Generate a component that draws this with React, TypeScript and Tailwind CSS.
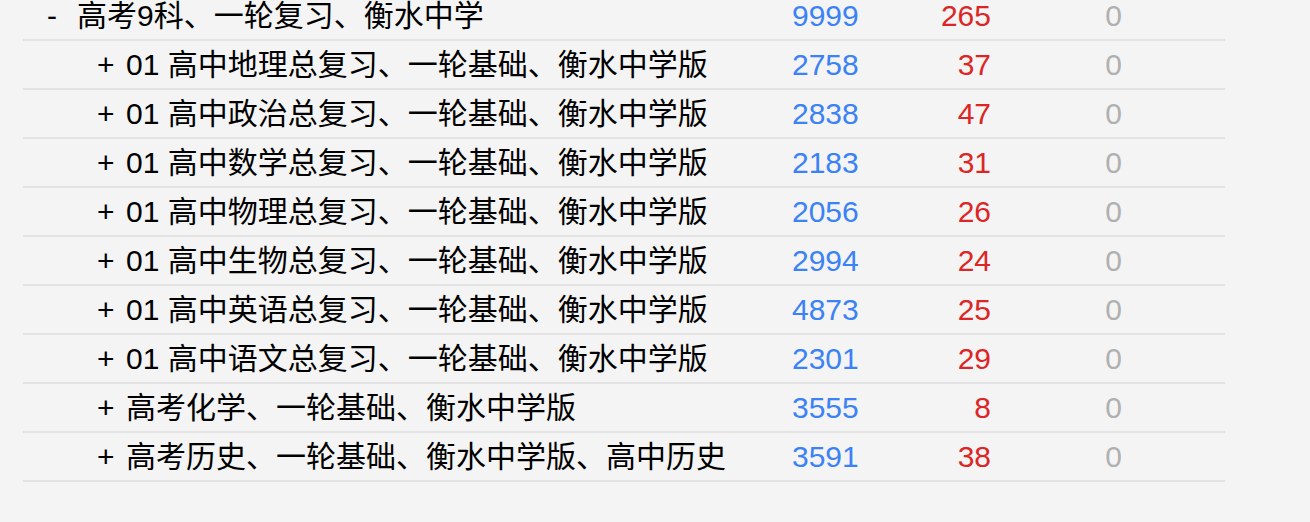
const rows = [
  { level: 0, name: "高考9科、一轮复习、衡水中学", total: 9999, done: 265, err: 0 },
  { level: 1, name: "01 高中地理总复习、一轮基础、衡水中学版", total: 2758, done: 37, err: 0 },
  { level: 1, name: "01 高中政治总复习、一轮基础、衡水中学版", total: 2838, done: 47, err: 0 },
  { level: 1, name: "01 高中数学总复习、一轮基础、衡水中学版", total: 2183, done: 31, err: 0 },
  { level: 1, name: "01 高中物理总复习、一轮基础、衡水中学版", total: 2056, done: 26, err: 0 },
  { level: 1, name: "01 高中生物总复习、一轮基础、衡水中学版", total: 2994, done: 24, err: 0 },
  { level: 1, name: "01 高中英语总复习、一轮基础、衡水中学版", total: 4873, done: 25, err: 0 },
  { level: 1, name: "01 高中语文总复习、一轮基础、衡水中学版", total: 2301, done: 29, err: 0 },
  { level: 1, name: "高考化学、一轮基础、衡水中学版", total: 3555, done: 8, err: 0 },
  { level: 1, name: "高考历史、一轮基础、衡水中学版、高中历史", total: 3591, done: 38, err: 0 },
];

export default function App() {
  return (
    <div
      className="h-[522px] overflow-hidden bg-[#f4f4f4] text-[30px] leading-[47px] text-black"
      style={{ fontFamily: '"Liberation Sans", "Noto Sans CJK SC", sans-serif' }}
    >
      <div className="ml-[23px] -mt-[8px] w-[1202px]">
        {rows.map((row, i) => (
          <div key={i} className="flex h-[49px] border-b-2 border-[#e3e3e3] whitespace-nowrap">
            <div className={row.level === 0 ? "flex w-[769px] pl-[24px]" : "flex w-[769px] pl-[74px]"}>
              <span className={row.level === 0 ? "w-[30px]" : "w-[29px]"}>{row.level === 0 ? "-" : "+"}</span>
              <span>{row.name}</span>
            </div>
            <div className="w-[120px] text-[#3b82f6]">{row.total}</div>
            <div className="w-[79px] text-right text-[#dc2626]">{row.done}</div>
            <div className="w-[131px] text-right text-[#b0b0b0]">{row.err}</div>
          </div>
        ))}
      </div>
    </div>
  );
}
